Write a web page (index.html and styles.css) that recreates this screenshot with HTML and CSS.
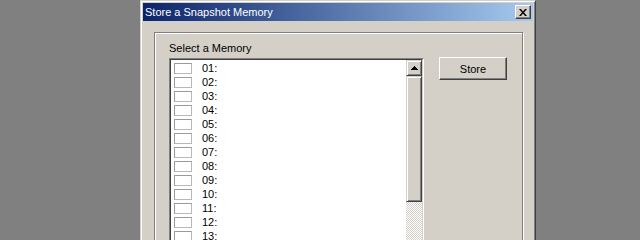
FILE: index.html
```html
<!DOCTYPE html>
<html>
<head>
<meta charset="utf-8">
<link rel="stylesheet" href="styles.css">
</head>
<body>
<div class="desk">
  <div class="dialog">
    <div class="titlebar">
      <span class="title">Store a Snapshot Memory</span>
      <span class="close"><svg width="8" height="7" viewBox="0 0 8 7"><path d="M0 0h2l2 2.4L6 0h2L5 3.5 8 7H6L4 4.6 2 7H0l3-3.5z" fill="#000"/></svg></span>
    </div>
    <div class="body">
      <div class="group">
        <div class="leftcol">
          <div class="label">Select a Memory</div>
          <div class="listbox">
            <div class="listin">
              <div class="items">
                <div class="row"><span class="cb"></span><span>01:</span></div>
                <div class="row"><span class="cb"></span><span>02:</span></div>
                <div class="row"><span class="cb"></span><span>03:</span></div>
                <div class="row"><span class="cb"></span><span>04:</span></div>
                <div class="row"><span class="cb"></span><span>05:</span></div>
                <div class="row"><span class="cb"></span><span>06:</span></div>
                <div class="row"><span class="cb"></span><span>07:</span></div>
                <div class="row"><span class="cb"></span><span>08:</span></div>
                <div class="row"><span class="cb"></span><span>09:</span></div>
                <div class="row"><span class="cb"></span><span>10:</span></div>
                <div class="row"><span class="cb"></span><span>11:</span></div>
                <div class="row"><span class="cb"></span><span>12:</span></div>
                <div class="row"><span class="cb"></span><span>13:</span></div>
                <div class="row"><span class="cb"></span><span>14:</span></div>
              </div>
              <div class="scrollbar">
                <div class="sbtn"><svg width="7" height="4" viewBox="0 0 7 4"><path d="M3 0h1v1h1v1h1v1h1v1H0V3h1V2h1V1h1z" fill="#000"/></svg></div>
                <div class="thumb"></div>
                <div class="track"></div>
              </div>
            </div>
          </div>
        </div>
        <div class="rightcol">
          <button class="btn">Store</button>
        </div>
      </div>
    </div>
  </div>
</div>
</body>
</html>
```

FILE: styles.css
```css
html, body {
  margin: 0;
  height: 240px;
  overflow: hidden;
  background: #808080;
  font-family: "Liberation Sans", Arial, sans-serif;
  font-size: 11px;
  color: #000;
}

.desk {
  padding-left: 140px;
  height: 240px;
  overflow: hidden;
}

.dialog {
  width: 396px;
  height: 320px;
  box-sizing: border-box;
  background: #d4d0c8;
  border: 1px solid;
  border-color: #d4d0c8 #404040 #404040 #d4d0c8;
  box-shadow: inset 1px 1px #fff, inset -1px -1px #808080;
  padding: 2px;
}

.titlebar {
  height: 18px;
  display: flex;
  align-items: center;
  justify-content: space-between;
  padding: 0 2px;
  background: linear-gradient(to right, #0a246a, #a6caf0);
}

.title {
  color: #fff;
  line-height: 13px;
}

.close {
  width: 16px;
  height: 14px;
  box-sizing: border-box;
  background: #d4d0c8;
  border: 1px solid;
  border-color: #fff #404040 #404040 #fff;
  box-shadow: inset -1px -1px #808080;
  display: flex;
  align-items: center;
  justify-content: center;
}

.close svg { display: block; }

.body {
  padding: 11px 10px 0 11px;
}

.group {
  display: flex;
  gap: 15px;
  height: 280px;
  border: 1px solid #808080;
  box-shadow: inset 1px 1px #fff, 1px 1px #fff;
  padding: 0 14px;
}

.leftcol {
  width: 255px;
  padding-top: 9px;
}

.label {
  line-height: 13px;
  margin-bottom: 3px;
}

.listbox {
  border: 1px solid;
  border-color: #808080 #fff #fff #808080;
}

.listin {
  display: flex;
  height: 240px;
  background: #fff;
  border: 1px solid;
  border-color: #404040 #d4d0c8 #d4d0c8 #404040;
}

.items {
  flex: 1;
  padding-top: 1px;
}

.row {
  height: 14px;
  display: flex;
  align-items: center;
  padding-left: 3px;
  line-height: 13px;
}

.cb {
  width: 18px;
  height: 11px;
  box-sizing: border-box;
  border: 1px solid;
  border-color: #9a9a9a #b8b8b8 #b8b8b8 #9a9a9a;
  background: #fff;
  margin-right: 10px;
}

.scrollbar {
  width: 16px;
  display: flex;
  flex-direction: column;
}

.sbtn, .thumb {
  box-sizing: border-box;
  background: #d4d0c8;
  border: 1px solid;
  border-color: #d4d0c8 #404040 #404040 #d4d0c8;
  box-shadow: inset 1px 1px #fff, inset -1px -1px #808080;
}

.sbtn {
  height: 16px;
  display: flex;
  align-items: center;
  justify-content: center;
}

.sbtn svg { display: block; }

.thumb {
  height: 126px;
}

.track {
  flex: 1;
  background: repeating-conic-gradient(#fff 0 25%, #d4d0c8 0 50%) 0 0 / 2px 2px;
}

.rightcol {
  padding-top: 24px;
}

.btn {
  display: block;
  width: 68px;
  height: 23px;
  padding: 0;
  margin: 0;
  font: inherit;
  color: #000;
  background: #d4d0c8;
  border: 1px solid;
  border-color: #fff #404040 #404040 #fff;
  box-shadow: inset -1px -1px #808080;
}
```
